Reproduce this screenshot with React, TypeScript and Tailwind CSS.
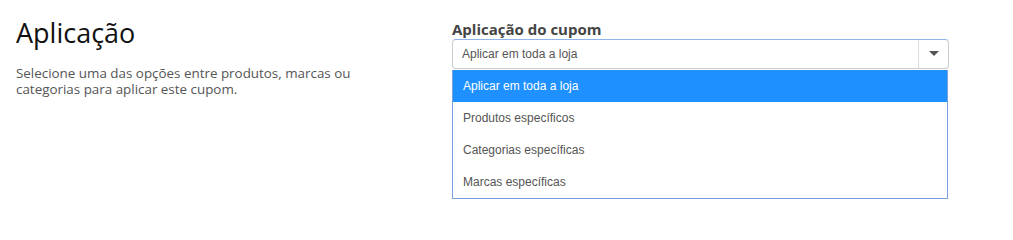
import React, { useState } from 'react';

const options = [
  'Aplicar em toda a loja',
  'Produtos específicos',
  'Categorias específicas',
  'Marcas específicas',
];

const App = () => {
  const [selected, setSelected] = useState(0);

  return (
    <div className="w-[1013px] h-[226px] bg-white flex" style={{ fontFamily: '"Open Sans", sans-serif' }}>
      <div className="w-[452px] pl-4 pt-[14px]">
        <h1 className="text-[27px] leading-[38px] text-[#111]">Aplicação</h1>
        <p className="mt-[13px] text-[13.4px] leading-[16px] text-[#555] w-[370px]">
          Selecione uma das opções entre produtos, marcas ou categorias para aplicar este cupom.
        </p>
      </div>

      <div className="w-[497px] pt-[19px]">
        <label className="block text-[15px] leading-[20px] font-bold text-[#444]">Aplicação do cupom</label>
        <div className="flex h-[30px] border border-[#ccc] border-t-[#8fb4ec] rounded-[4px] bg-white">
          <div
            className="flex-1 flex items-center pl-[9px] text-[12px] text-[#555]"
            style={{ fontFamily: '"Liberation Sans", Arial, sans-serif' }}
          >
            {options[selected]}
          </div>
          <div className="w-[30px] border-l border-[#ddd] flex items-center justify-center">
            <svg width="10" height="6" viewBox="0 0 10 6">
              <path d="M0 0 L10 0 L5 5 Z" fill="#555" />
            </svg>
          </div>
        </div>
        <ul
          className="mt-[1px] w-[496px] border border-[#7a9ee0] border-t-0 bg-white"
          style={{ fontFamily: '"Liberation Sans", Arial, sans-serif' }}
        >
          {options.map((o, i) => (
            <li
              key={o}
              onClick={() => setSelected(i)}
              className={
                i === selected
                  ? 'h-[32px] flex items-center pl-[10px] text-[12px] bg-[#1e90ff] text-white'
                  : 'h-[32px] flex items-center pl-[10px] text-[12px] text-[#555]'
              }
            >
              {o}
            </li>
          ))}
        </ul>
      </div>
    </div>
  );
};

export default App;
